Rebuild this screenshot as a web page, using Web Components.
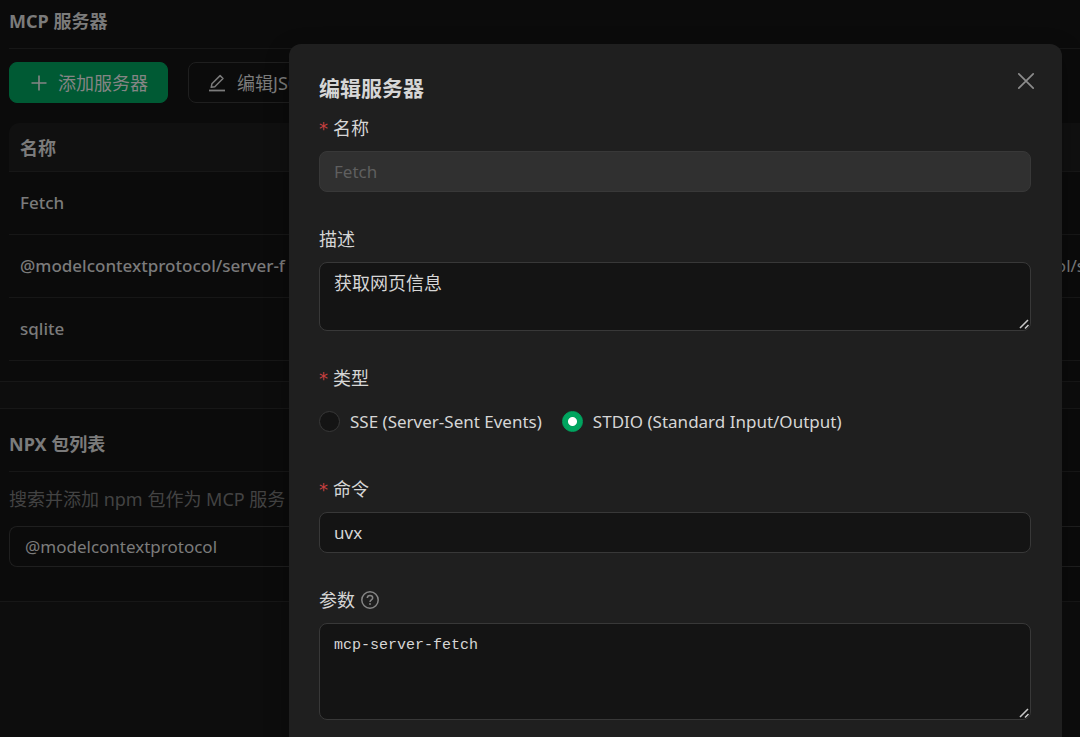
<!DOCTYPE html>
<html lang="zh-CN">
<head>
<meta charset="utf-8">
<title>MCP 服务器</title>
<style>
  html, body { margin: 0; height: 100%; }
  body {
    overflow: hidden;
    color-scheme: dark;
    background: #0d0d0d;
    --ui: "Noto Sans", "Noto Sans CJK SC", sans-serif;
    --dim: #7b7b7b;
    --line: #171717;
    --text: #d6d6d6;
    --edge: #383838;
    --field: #141414;
    --accent: #00a45f;
    font: 18px/28px var(--ui);
    color: var(--dim);
  }
</style>
</head>
<body>
<mcp-settings></mcp-settings>
<script>
const define = (name, html, init) => {
  const template = document.createElement('template');
  template.innerHTML = html;
  customElements.define(name, class extends HTMLElement {
    constructor() {
      super();
      this.attachShadow({ mode: 'open' }).append(template.content.cloneNode(true));
    }
    connectedCallback() { if (init) init(this, this.shadowRoot); }
  });
};

define('setting-card', `
  <style>
    :host { display: block; background: #0b0b0b; border: 0 solid var(--line); border-width: 1px 0; padding: 21px 0 34px 9px; }
    :host([scrolled]) { border-top: 0; padding: 7px 0 20px 9px; }
    h2 { margin: 0; padding-bottom: 13px; border-bottom: 1px solid var(--line); font-size: 18px; line-height: 28px; font-weight: 700; }
    .body { padding-top: 13px; }
  </style>
  <h2><slot name="title"></slot></h2>
  <div class="body"><slot></slot></div>`);

define('tool-button', `
  <style>
    :host { display: block; }
    button { display: flex; align-items: center; gap: 9px; box-sizing: border-box; height: 41px; padding: 1px 19px 0;
      border: 1px solid #1f1f1f; border-radius: 8px; background: #0b0b0b; color: var(--dim);
      font: 18px/28px var(--ui); white-space: nowrap; }
    :host([primary]) button { background: #005a34; border-color: #005a34; color: #858585; }
    ::slotted(svg) { width: 20px; height: 20px; display: block; }
  </style>
  <button type="button"><slot name="icon"></slot><span><slot></slot></span></button>`);

define('server-table', `
  <style>
    :host { display: block; overflow: hidden; border-radius: 10px 0 0 0; }
    table { width: 100%; table-layout: fixed; border-spacing: 0; text-align: left; }
    col.name { width: 60%; }
    th, td { box-sizing: border-box; padding: 0 11px; border-bottom: 1px solid var(--line); white-space: nowrap; }
    th { height: 49px; padding-top: 2px; background: #101010; font-weight: 700; }
    td { height: 63px; font-size: 17px; font-weight: 500; }
    td + td { padding-right: 0; font-weight: 400; text-align: right; }
    td + td span { margin-right: -5px; }
  </style>
  <table>
    <colgroup><col class="name"><col></colgroup>
    <thead><tr><th>名称</th><th></th></tr></thead>
    <tbody>
      <tr><td>Fetch</td><td></td></tr>
      <tr><td>@modelcontextprotocol/server-f</td><td><span>ol/s</span></td></tr>
      <tr><td>sqlite</td><td></td></tr>
    </tbody>
  </table>`);

define('package-search', `
  <style>
    :host { display: block; }
    label { display: block; margin-bottom: 13px; color: #434343; white-space: nowrap; }
    input { display: block; box-sizing: border-box; width: 100%; height: 41px; padding: 0 15px; border: 1px solid #1f1f1f; border-right: 0;
      border-radius: 8px 0 0 8px; background: #0b0b0b; color: var(--dim); font: 17px/28px var(--ui); outline: 0; }
  </style>
  <label for="scope">搜索并添加 npm 包作为 MCP 服务</label>
  <input id="scope" type="text" value="@modelcontextprotocol">`);

define('form-field', `
  <style>
    :host { display: block; }
    .label { display: flex; align-items: center; height: 24px; margin-bottom: 11px; }
    label { line-height: 24px; }
    .star { display: none; padding-top: 2px; margin-right: 5px; color: #c9403f; font: 18px/18px "DejaVu Sans", sans-serif; }
    :host([required]) .star { display: block; }
    ::slotted(svg) { width: 20px; height: 20px; margin-left: 5px; color: #858585; }
    input, textarea { display: block; box-sizing: border-box; width: 100%; height: 41px; margin: 0; padding: 0 14px;
      border: 1px solid var(--edge); border-radius: 8px; background: var(--field); color: var(--text);
      font: 18px/28px var(--ui); outline: 0; }
    input { font-size: 17px; }
    textarea { padding: 6px 14px; resize: vertical; }
    textarea::-webkit-resizer {
      background: url("data:image/svg+xml,%3Csvg xmlns='http://www.w3.org/2000/svg' width='15' height='15'%3E%3Cpath d='M5 13L13 5M10 13.5L13.5 10' stroke='%23c8c8c8' stroke-width='1.6'/%3E%3C/svg%3E") right bottom no-repeat;
    }
    textarea[rows="2"] { height: 69px; }
    textarea[rows="3"] { height: 97px; }
    :host([mono]) textarea { padding-top: 8px; font: 15px/28px "Liberation Mono", monospace; }
    input:disabled { background: #303030; color: #5f5f5f; }
  </style>
  <div class="label"><span class="star" aria-hidden="true">*</span><label for="control"></label><slot name="hint"></slot></div>
  <div class="control"></div>`,
  (host, root) => {
    root.querySelector('label').textContent = host.getAttribute('label');
    const rows = host.getAttribute('rows');
    const control = document.createElement(rows ? 'textarea' : 'input');
    control.id = 'control';
    control.spellcheck = false;
    if (rows) control.rows = rows; else control.type = 'text';
    control.value = host.getAttribute('value');
    control.disabled = host.hasAttribute('disabled');
    root.querySelector('.control').replaceChildren(control);
  });

define('type-picker', `
  <style>
    :host { display: block; }
    fieldset { margin: 0; padding: 0; border: 0; min-width: 0; }
    legend { display: flex; align-items: center; height: 24px; padding: 0; margin-bottom: 11px; line-height: 24px; }
    .star { padding-top: 2px; margin-right: 5px; color: #c9403f; font: 18px/18px "DejaVu Sans", sans-serif; }
    .options { display: flex; align-items: center; gap: 20px; height: 41px; font-size: 17px; white-space: nowrap; }
    label { display: flex; align-items: center; gap: 10px; }
    input { appearance: none; box-sizing: border-box; width: 21px; height: 21px; margin: 0; border: 1px solid var(--edge); border-radius: 50%; background: var(--field); }
    input:checked { border-color: var(--accent); background: radial-gradient(circle, #fff 0 4px, var(--accent) 5px); }
  </style>
  <fieldset>
    <legend><span class="star" aria-hidden="true">*</span>类型</legend>
    <div class="options">
      <label><input type="radio" name="type">SSE (Server-Sent Events)</label>
      <label><input type="radio" name="type" checked>STDIO (Standard Input/Output)</label>
    </div>
  </fieldset>`);

define('edit-modal', `
  <style>
    :host { position: absolute; inset: 0; overflow: hidden; box-sizing: border-box; padding: 44px 18px 0 289px; }
    section { position: relative; box-sizing: border-box; min-height: 100%; padding: 30px 31px 30px 30px; border-radius: 12px;
      background: #1f1f1f; color: var(--text); box-shadow: 0 8px 24px rgba(0, 0, 0, .3); }
    h1 { margin: 0 0 14px; font-size: 21px; line-height: 28px; font-weight: 700; }
    .close { position: absolute; top: 22px; right: 21px; width: 30px; height: 30px; padding: 5px; border: 0; background: none; color: #8c8c8c; }
    .close svg { display: block; width: 20px; height: 20px; }
    .fields { display: grid; gap: 35px; }
  </style>
  <section role="dialog" aria-labelledby="title">
    <h1 id="title"><slot name="title"></slot></h1>
    <button class="close" type="button" aria-label="关闭">
      <svg viewBox="0 0 20 20" fill="none" stroke="currentColor" stroke-width="1.7" stroke-linecap="round"><path d="M2.8 2.8 17.2 17.2M17.2 2.8 2.8 17.2"/></svg>
    </button>
    <div class="fields"><slot></slot></div>
  </section>`);

define('mcp-settings', `
  <style>
    :host { display: block; position: relative; height: 100%; overflow: hidden; }
    main { display: grid; gap: 26px; }
    .tools { display: flex; gap: 20px; margin-bottom: 20px; }
  </style>
  <main>
    <setting-card scrolled>
      <span slot="title">MCP 服务器</span>
      <div class="tools">
        <tool-button primary>
          <svg slot="icon" viewBox="0 0 20 20" fill="none" stroke="currentColor" stroke-width="1.6"><path d="M10 2.5V17.5M2.5 10H17.5"/></svg>添加服务器</tool-button>
        <tool-button>
          <svg slot="icon" viewBox="0 0 20 20" fill="none" stroke="currentColor" stroke-width="1.5" stroke-linejoin="round"><path d="M3.2 14.3 3.9 10.8 12.1 2.6 15 5.5 6.8 13.7Z"/><path stroke-width="1.8" d="M1 17.5H17"/></svg>编辑JSON</tool-button>
      </div>
      <server-table></server-table>
    </setting-card>
    <setting-card>
      <span slot="title">NPX 包列表</span>
      <package-search></package-search>
    </setting-card>
  </main>
  <edit-modal>
    <span slot="title">编辑服务器</span>
    <form-field required disabled label="名称" value="Fetch"></form-field>
    <form-field label="描述" rows="2" value="获取网页信息"></form-field>
    <type-picker></type-picker>
    <form-field required label="命令" value="uvx"></form-field>
    <form-field mono label="参数" rows="3" value="mcp-server-fetch">
      <svg slot="hint" viewBox="0 0 20 20" fill="none" stroke="currentColor" stroke-width="1.5"><circle cx="10" cy="10" r="8.2"/><path d="M7.3 8.1C7.3 6.5 8.5 5.5 10 5.5S12.7 6.5 12.7 7.9C12.7 9.8 10 9.9 10 12"/><circle cx="10" cy="14" r=".9" fill="currentColor" stroke="none"/></svg>
    </form-field>
  </edit-modal>`);
</script>
</body>
</html>
